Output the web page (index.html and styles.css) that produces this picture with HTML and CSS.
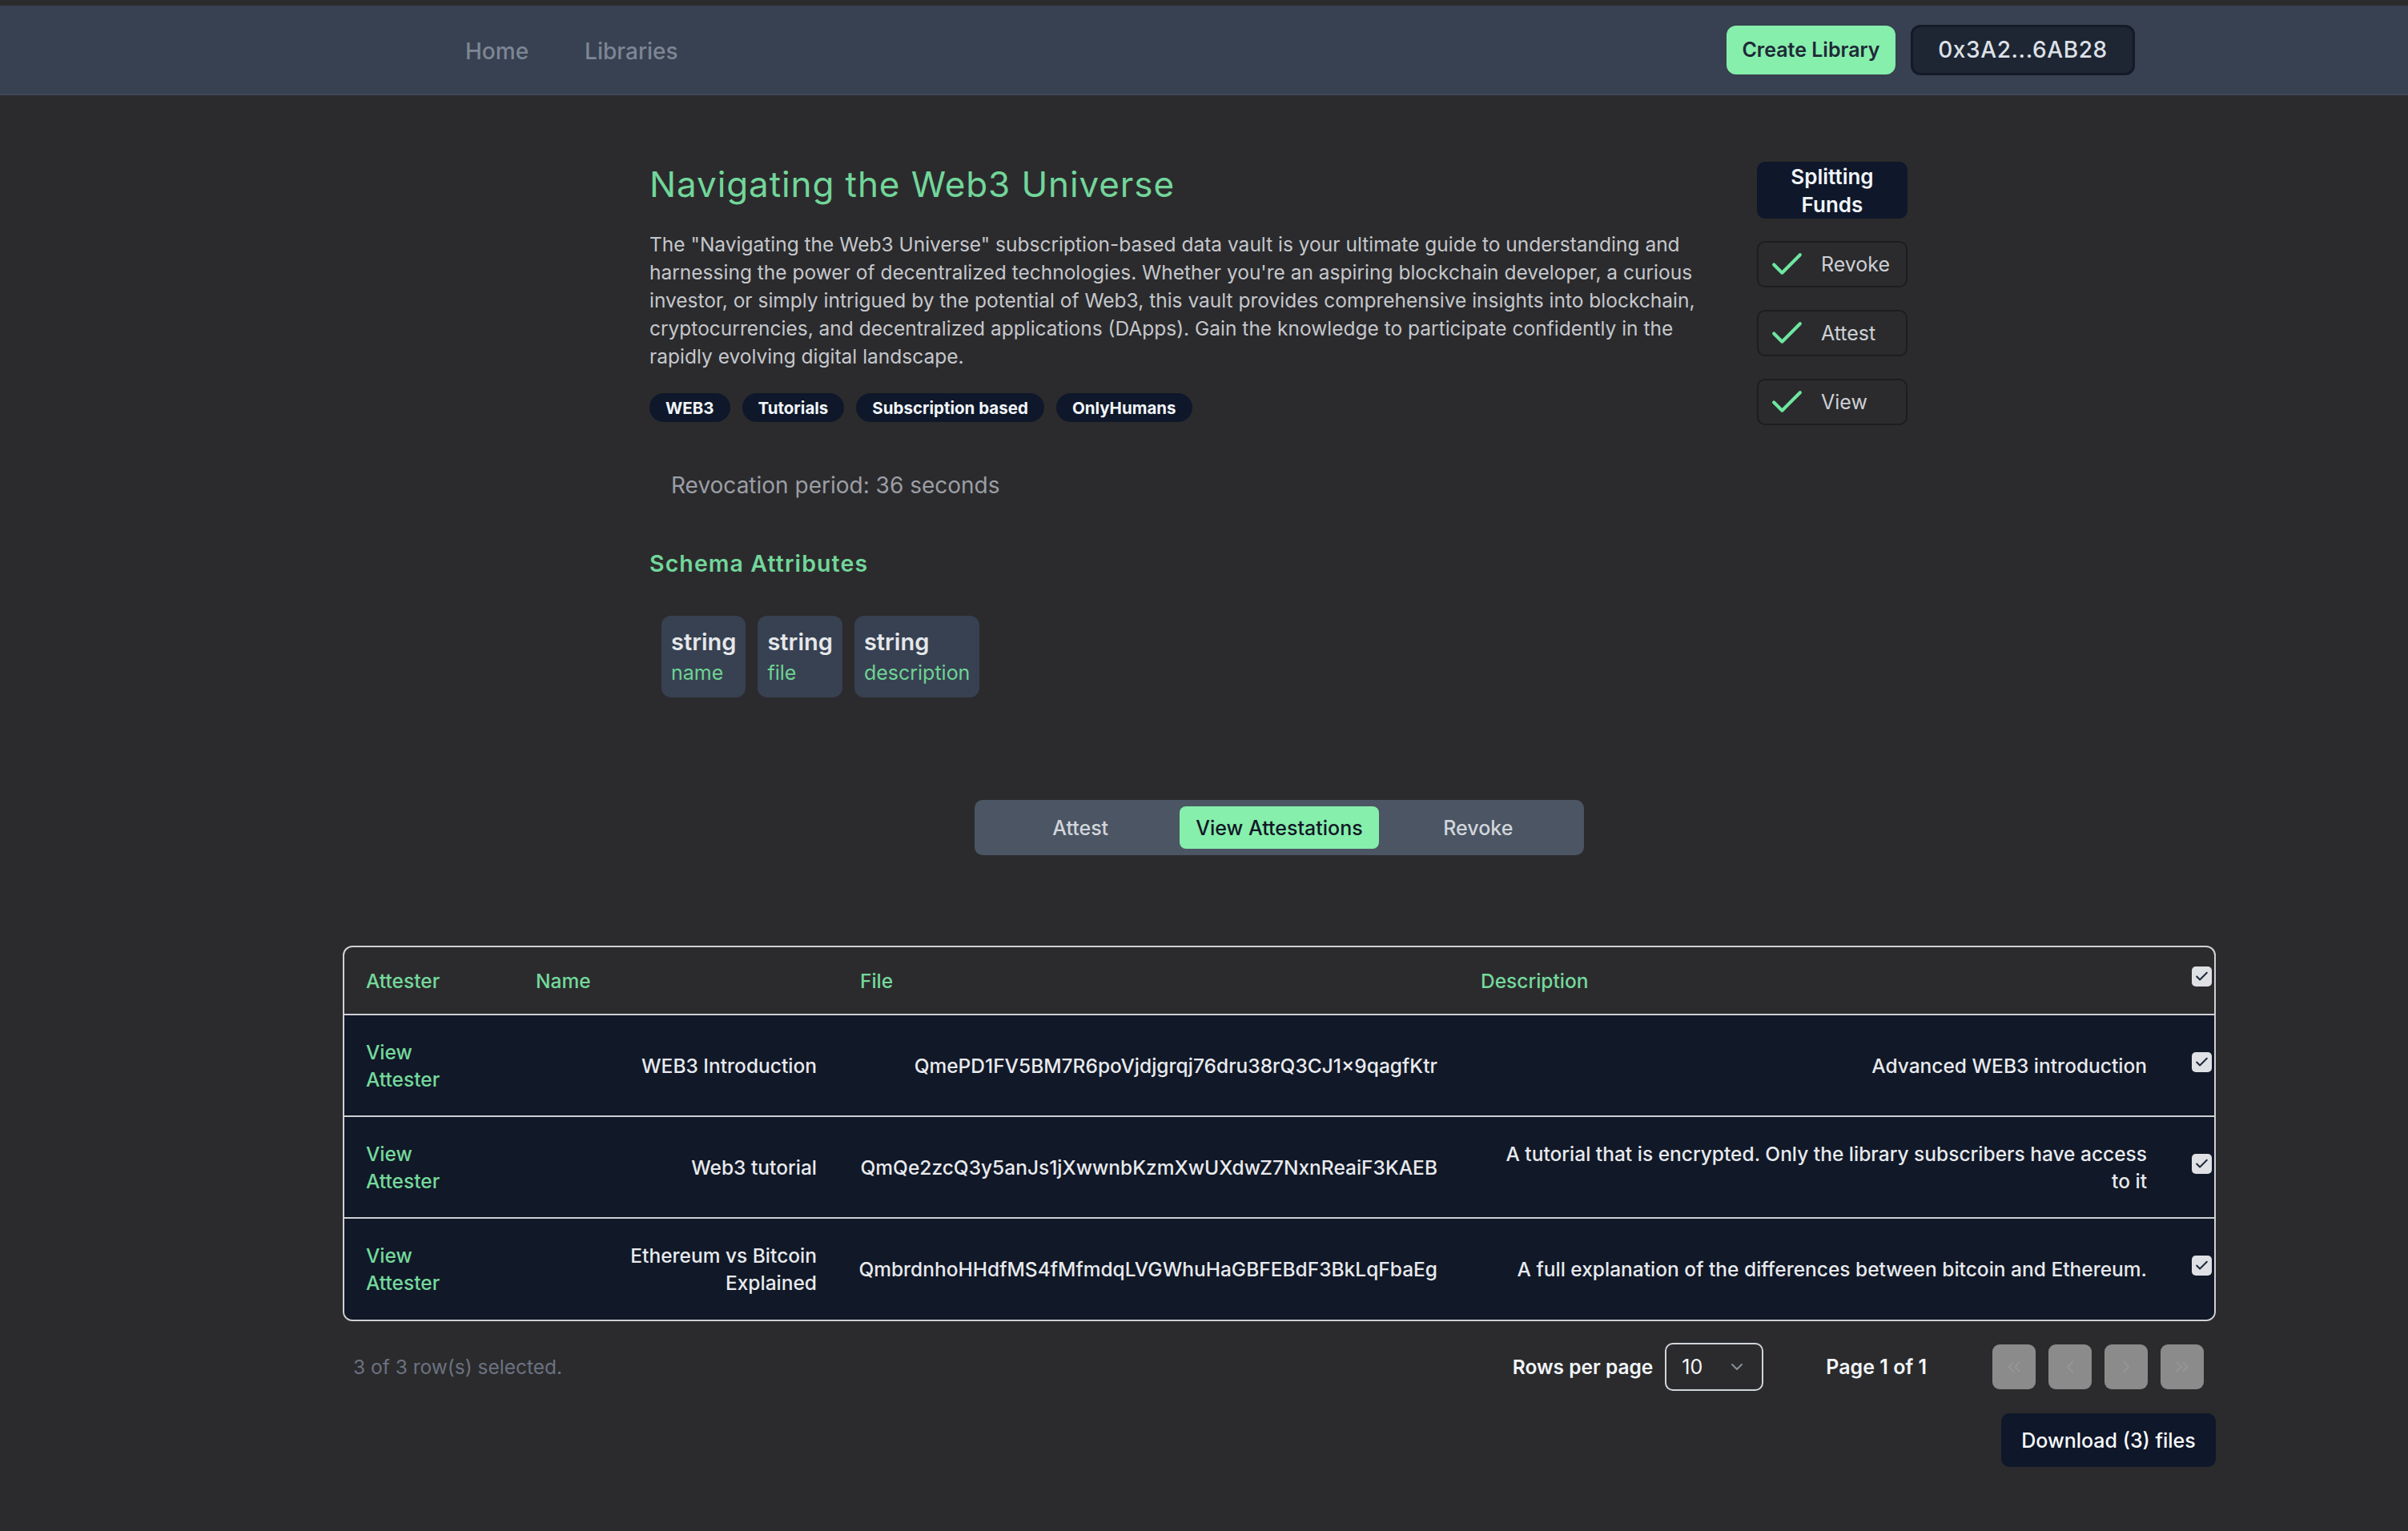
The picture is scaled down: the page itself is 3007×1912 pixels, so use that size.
FILE: index.html
```html
<!DOCTYPE html>
<html lang="en">
<head>
<meta charset="utf-8">
<title>Navigating the Web3 Universe</title>
<link rel="stylesheet" href="styles.css">
</head>
<body>
<header class="nav">
  <nav class="nav-links">
    <a class="nav-link">Home</a>
    <a class="nav-link">Libraries</a>
  </nav>
  <div class="nav-actions">
    <button class="btn-create">Create Library</button>
    <button class="btn-addr">0x3A2...6AB28</button>
  </div>
</header>

<main class="container">
  <section class="detail">
    <div class="info">
      <h1 class="title">Navigating the Web3 Universe</h1>
      <p class="desc">The "Navigating the Web3 Universe" subscription-based data vault is your ultimate guide to understanding and harnessing the power of decentralized technologies. Whether you're an aspiring blockchain developer, a curious investor, or simply intrigued by the potential of Web3, this vault provides comprehensive insights into blockchain, cryptocurrencies, and decentralized applications (DApps). Gain the knowledge to participate confidently in the rapidly evolving digital landscape.</p>
      <div class="tags">
        <span class="tag">WEB3</span>
        <span class="tag">Tutorials</span>
        <span class="tag">Subscription based</span>
        <span class="tag">OnlyHumans</span>
      </div>
      <div class="revocation">Revocation period: 36 seconds</div>
      <h2 class="schema-title">Schema Attributes</h2>
      <div class="chips">
        <div class="chip"><div class="chip-type">string</div><div class="chip-name">name</div></div>
        <div class="chip"><div class="chip-type">string</div><div class="chip-name">file</div></div>
        <div class="chip"><div class="chip-type">string</div><div class="chip-name">description</div></div>
      </div>
    </div>
    <aside class="side">
      <div class="split">Splitting<br>Funds</div>
      <div class="opt"><svg class="opt-check" viewBox="0 0 24 24"><polyline points="20 6 9 17 4 12"/></svg><span>Revoke</span></div>
      <div class="opt"><svg class="opt-check" viewBox="0 0 24 24"><polyline points="20 6 9 17 4 12"/></svg><span>Attest</span></div>
      <div class="opt"><svg class="opt-check" viewBox="0 0 24 24"><polyline points="20 6 9 17 4 12"/></svg><span>View</span></div>
    </aside>
  </section>

  <div class="tabs">
    <div class="tab">Attest</div>
    <div class="tab active">View Attestations</div>
    <div class="tab">Revoke</div>
  </div>

  <div class="table-wrap">
    <table class="data">
      <colgroup>
        <col class="c-att"><col class="c-name"><col class="c-file"><col class="c-desc"><col class="c-cb">
      </colgroup>
      <thead>
        <tr>
          <th>Attester</th>
          <th>Name</th>
          <th>File</th>
          <th>Description</th>
          <th class="cb-cell"><span class="cb"><svg viewBox="0 0 24 24"><polyline points="20 6 9 17 4 12"/></svg></span></th>
        </tr>
      </thead>
      <tbody>
        <tr>
          <td class="att">View Attester</td>
          <td class="name">WEB3 Introduction</td>
          <td class="file">QmePD1FV5BM7R6poVjdjgrqj76dru38rQ3CJ1×9qagfKtr</td>
          <td class="dsc">Advanced WEB3 introduction</td>
          <td class="cb-cell"><span class="cb"><svg viewBox="0 0 24 24"><polyline points="20 6 9 17 4 12"/></svg></span></td>
        </tr>
        <tr>
          <td class="att">View Attester</td>
          <td class="name">Web3 tutorial</td>
          <td class="file">QmQe2zcQ3y5anJs1jXwwnbKzmXwUXdwZ7NxnReaiF3KAEB</td>
          <td class="dsc">A tutorial that is encrypted. Only the library subscribers have access to it</td>
          <td class="cb-cell"><span class="cb"><svg viewBox="0 0 24 24"><polyline points="20 6 9 17 4 12"/></svg></span></td>
        </tr>
        <tr>
          <td class="att">View Attester</td>
          <td class="name">Ethereum vs Bitcoin Explained</td>
          <td class="file">QmbrdnhoHHdfMS4fMfmdqLVGWhuHaGBFEBdF3BkLqFbaEg</td>
          <td class="dsc">A full explanation of the differences between bitcoin and Ethereum.</td>
          <td class="cb-cell"><span class="cb"><svg viewBox="0 0 24 24"><polyline points="20 6 9 17 4 12"/></svg></span></td>
        </tr>
      </tbody>
    </table>
  </div>

  <div class="table-footer">
    <div class="selected">3 of 3 row(s) selected.</div>
    <div class="rows-label">Rows per page</div>
    <div class="select"><span>10</span><svg class="select-chev" viewBox="0 0 24 24"><polyline points="6 9 12 15 18 9"/></svg></div>
    <div class="page-info">Page 1 of 1</div>
    <div class="pager">
      <span class="pbtn"><svg viewBox="0 0 24 24"><polyline points="11 17 6 12 11 7"/><polyline points="18 17 13 12 18 7"/></svg></span>
      <span class="pbtn"><svg viewBox="0 0 24 24"><polyline points="15 18 9 12 15 6"/></svg></span>
      <span class="pbtn"><svg viewBox="0 0 24 24"><polyline points="9 18 15 12 9 6"/></svg></span>
      <span class="pbtn"><svg viewBox="0 0 24 24"><polyline points="13 17 18 12 13 7"/><polyline points="6 17 11 12 6 7"/></svg></span>
    </div>
  </div>

  <div class="download-row">
    <button class="btn-download">Download (3) files</button>
  </div>
</main>
</body>
</html>
```

FILE: styles.css
```css
* { box-sizing: border-box; }
html, body { margin: 0; }
body {
  background: #2b2b2d;
  font-family: Inter, "Noto Sans", sans-serif;
  color: #e5e7eb;
  padding-top: 7px;
  min-height: 1912px;
}

/* Navbar */
.nav {
  height: 112px;
  background: #374151;
  border-bottom: 2px solid #404959;
  display: flex;
  align-items: center;
  padding: 0 341px 0 581px;
}
.nav-links { display: flex; gap: 70px; padding-top: 3px; }
.nav-link { font-size: 28px; font-weight: 500; color: #7d8694; }
.nav-actions { margin-left: auto; display: flex; align-items: center; gap: 19px; }
.btn-create {
  width: 211px; height: 61px;
  background: #86efac; border: 0; border-radius: 12px;
  font-family: Inter, sans-serif; font-size: 25px; font-weight: 600; color: #1f2937;
}
.btn-addr {
  width: 280px; height: 63px;
  background: #1e2533; border: 3px solid #141a27; border-radius: 12px;
  font-family: Inter, sans-serif; font-size: 28px; font-weight: 500; color: #dde1e7;
  letter-spacing: 0.6px;
}

/* Layout */
.container { margin-left: 428px; width: 2339px; }
.detail {
  display: flex;
  justify-content: space-between;
  padding: 83px 385px 0 383px;
}
.info { width: 1317px; }

.title {
  margin: 0;
  font-size: 44px; line-height: 56px; font-weight: 400;
  color: #72d69a; letter-spacing: 0.9px;
}
.desc {
  margin: 30px 0 0;
  font-size: 24.5px; line-height: 35px;
  color: #c5c7cc;
}
.tags { display: flex; gap: 15px; margin-top: 28px; }
.tag {
  height: 36px; padding: 0 20px; border-radius: 18px;
  background: #0f172a; color: #f1f5f9;
  font-size: 20.5px; font-weight: 700;
  display: flex; align-items: center;
}
.revocation {
  margin-top: 59px; padding-left: 27px;
  font-size: 28px; line-height: 40px; color: #9b9ea5;
}
.schema-title {
  margin: 58px 0 0;
  font-size: 28.5px; line-height: 40px; font-weight: 600;
  color: #72d69a; letter-spacing: 1.1px;
}
.chips { display: flex; gap: 15px; margin: 45px 0 0 15px; }
.chip { background: #374151; border-radius: 12px; padding: 14px 12px 12px; }
.chip-type { font-size: 29px; line-height: 38px; font-weight: 600; color: #e5e7eb; }
.chip-name { font-size: 25px; line-height: 38px; color: #6fd394; }

/* Side panel */
.side { width: 188px; display: flex; flex-direction: column; gap: 28px; }
.split {
  height: 71px; background: #0f172a; border-radius: 10px;
  color: #f1f5f9; font-size: 26px; font-weight: 600; line-height: 35px;
  display: flex; align-items: center; justify-content: center; text-align: center;
}
.opt {
  height: 58px; border: 2px solid #1d1d1f; border-radius: 10px;
  display: flex; align-items: center; gap: 18px; padding-left: 11px;
  color: #cdd0d6; font-size: 25px;
}
.opt-check {
  width: 49px; height: 49px; fill: none;
  stroke: #6ee7a0; stroke-width: 2; stroke-linecap: round; stroke-linejoin: round;
}

/* Tabs */
.tabs {
  width: 761px; height: 69px;
  margin: 128px auto 0;
  background: #4b5563; border-radius: 10px; padding: 8px;
  display: grid; grid-template-columns: repeat(3, 1fr);
}
.tab {
  display: flex; align-items: center; justify-content: center;
  font-size: 25px; font-weight: 500; color: #d1d5db; border-radius: 8px;
}
.tab.active { background: #86efac; color: #111827; }

/* Table */
.table-wrap {
  margin-top: 113px;
  border: 2px solid #cfd0d4; border-radius: 12px;
  overflow: hidden;
}
.data { width: 100%; border-collapse: separate; border-spacing: 0; table-layout: fixed; }
.c-att { width: 212px; }
.c-name { width: 405px; }
.c-file { width: 775px; }
.c-desc { width: 886px; }
.c-cb { width: 57px; }
.data th {
  height: 85px; padding: 0 27px;
  text-align: left; font-size: 24.5px; font-weight: 500; color: #74d99c;
  border-bottom: 2px solid #cfd0d4;
}
.data td {
  height: 127px; padding: 0 27px;
  text-align: right; vertical-align: middle;
  font-size: 24.5px; line-height: 34px; font-weight: 500; color: #e8eaee;
  background: #111827;
  border-bottom: 2px solid #cfd0d4;
}
.data tbody tr:last-child td { border-bottom: 0; height: 126px; }
.data td.att { text-align: left; color: #74d99c; padding-right: 70px; }
.data td.name { padding-left: 45px; }
.data td.file { padding-left: 10px; }
.data td.dsc { padding-left: 45px; }
.data .cb-cell { padding: 0 0 0 29px; text-align: left; }
.cb {
  width: 25px; height: 25px; border-radius: 5px;
  background: #dfe1e5;
  display: inline-flex; align-items: center; justify-content: center;
  vertical-align: middle;
  margin-bottom: 10px;
}
.cb svg {
  width: 19px; height: 19px; fill: none;
  stroke: #1f2937; stroke-width: 2.5; stroke-linecap: round; stroke-linejoin: round;
}

/* Footer */
.table-footer {
  display: flex; align-items: center;
  margin-top: 27px; height: 60px;
  padding: 0 15px 0 13px;
}
.selected { margin-right: auto; font-size: 24.5px; color: #6b7280; }
.rows-label { font-size: 24.5px; font-weight: 600; color: #f1f5f9; }
.select {
  margin-left: 15px; width: 123px; height: 60px;
  border: 2px solid #d1d5db; border-radius: 10px;
  display: flex; align-items: center; justify-content: space-between;
  padding: 0 19px;
  font-size: 25px; color: #f1f5f9;
}
.select-chev {
  width: 24px; height: 24px; fill: none;
  stroke: #8a8f98; stroke-width: 2; stroke-linecap: round; stroke-linejoin: round;
}
.page-info { margin-left: 78px; font-size: 25px; font-weight: 600; color: #f1f5f9; }
.pager { margin-left: 82px; display: flex; gap: 16px; }
.pbtn {
  width: 54px; height: 56px; border-radius: 9px;
  background: #8b8b8b;
  display: flex; align-items: center; justify-content: center;
}
.pbtn svg {
  width: 26px; height: 26px; fill: none;
  stroke: #959595; stroke-width: 2; stroke-linecap: round; stroke-linejoin: round;
}

.download-row { display: flex; justify-content: flex-end; margin-top: 28px; }
.btn-download {
  width: 268px; height: 67px;
  background: #0f172a; border: 0; border-radius: 10px;
  font-family: Inter, sans-serif; font-size: 25px; font-weight: 500; color: #f8fafc;
}
```
